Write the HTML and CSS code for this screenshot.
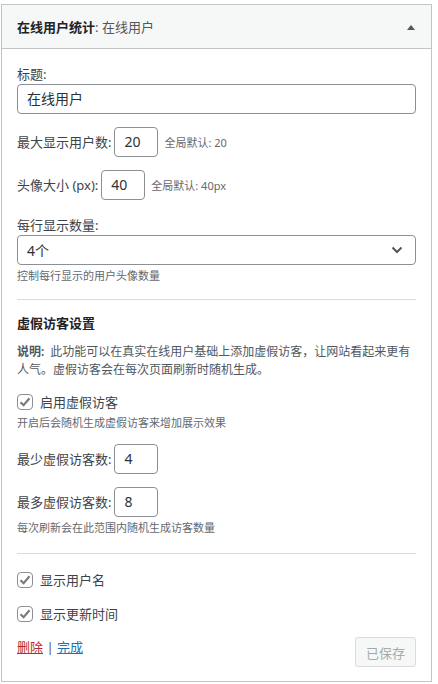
FILE: index.html
```html
<!DOCTYPE html>
<html lang="zh-CN">
<head>
<meta charset="utf-8">
<title>在线用户统计</title>
<link rel="stylesheet" href="styles.css">
</head>
<body>
<div class="widget">
  <div class="widget-top">
    <h3 class="widget-title"><span class="w-name">在线用户统计</span><span class="w-sub">: 在线用户</span></h3>
    <svg class="toggle" width="10" height="6" viewBox="0 0 10 6"><path d="M1 6 L5 1 L9 6 Z" fill="#50575e"/></svg>
  </div>
  <div class="widget-inside">
    <div class="field field-title">
      <label class="lbl">标题:</label>
      <div class="input wide">在线用户</div>
    </div>

    <div class="row row-first">
      <label class="lbl">最大显示用户数:</label>
      <div class="input small">20</div>
      <span class="note">全局默认: 20</span>
    </div>

    <div class="row">
      <label class="lbl">头像大小 (px):</label>
      <div class="input small">40</div>
      <span class="note">全局默认: 40px</span>
    </div>

    <div class="field field-select">
      <label class="lbl">每行显示数量:</label>
      <div class="select">
        <span>4个</span>
        <svg width="12" height="8" viewBox="0 0 12 8"><path d="M1.5 1.5 L6 6 L10.5 1.5" fill="none" stroke="#50575e" stroke-width="2"/></svg>
      </div>
      <div class="help">控制每行显示的用户头像数量</div>
    </div>

    <hr class="divider d1">

    <h4 class="section">虚假访客设置</h4>
    <p class="desc"><strong class="desc-key">说明:</strong><span>此功能可以在真实在线用户基础上添加虚假访客，让网站看起来更有</span><br><span>人气。虚假访客会在每次页面刷新时随机生成。</span></p>

    <div class="check check-fake">
      <span class="box"><svg width="14" height="14" viewBox="0 0 14 14"><path d="M2.5 7.2 L5.6 10.2 L11.5 3.3" fill="none" stroke="#787c82" stroke-width="2.2"/></svg></span>
      <span class="check-text">启用虚假访客</span>
    </div>
    <div class="help help-fake">开启后会随机生成虚假访客来增加展示效果</div>

    <div class="row row-min">
      <label class="lbl">最少虚假访客数:</label>
      <div class="input small">4</div>
    </div>
    <div class="row">
      <label class="lbl">最多虚假访客数:</label>
      <div class="input small">8</div>
    </div>
    <div class="help help-range">每次刷新会在此范围内随机生成访客数量</div>

    <hr class="divider d2">

    <div class="check check-name">
      <span class="box"><svg width="14" height="14" viewBox="0 0 14 14"><path d="M2.5 7.2 L5.6 10.2 L11.5 3.3" fill="none" stroke="#787c82" stroke-width="2.2"/></svg></span>
      <span class="check-text">显示用户名</span>
    </div>
    <div class="check check-time">
      <span class="box"><svg width="14" height="14" viewBox="0 0 14 14"><path d="M2.5 7.2 L5.6 10.2 L11.5 3.3" fill="none" stroke="#787c82" stroke-width="2.2"/></svg></span>
      <span class="check-text">显示更新时间</span>
    </div>

    <div class="actions">
      <div class="links"><a class="del" href="#">删除</a> <span class="sep">|</span> <a class="done" href="#">完成</a></div>
      <button class="saved" disabled>已保存</button>
    </div>
  </div>
</div>
</body>
</html>
```

FILE: styles.css
```css
* { box-sizing: border-box; }
html, body { margin: 0; padding: 0; background: #fff; }
body {
  font-family: "Noto Sans", "Noto Sans CJK SC", sans-serif;
  font-size: 13px;
  color: #3c434a;
}
.widget {
  margin: 4px 0 0 1px;
  width: 431px;
  border: 1px solid #c3c4c7;
  background: #fff;
}
.widget-top {
  height: 44px;
  background: #f6f7f7;
  border-bottom: 1px solid #c3c4c7;
  display: flex;
  align-items: center;
  justify-content: space-between;
  padding: 0 15px 0 15px;
}
.widget-title {
  margin: 0;
  font-size: 13px;
  line-height: 18px;
  font-weight: 600;
  color: #1d2327;
}
.w-sub { font-weight: 400; color: #50575e; }
.toggle { margin-top: 1px; }
.widget-inside { padding: 0 15px 14px; }

.lbl { display: block; line-height: 18px; }
.field-title { padding-top: 16px; }
.field-title .lbl { margin-bottom: 1px; }
.input {
  height: 30px;
  border: 1px solid #8c8f94;
  border-radius: 4px;
  font-size: 14px;
  line-height: 28px;
  padding: 0 9px;
  color: #2c3338;
  background: #fff;
}
.input.wide { width: 100%; }
.input.small { width: 44px; }

.row { display: flex; align-items: center; margin-top: 13px; }
.row .lbl { margin-right: 3px; }
.note { font-size: 11px; color: #646970; margin-left: 6px; }

.field-select { margin-top: 16px; }
.field-select .lbl { margin-bottom: 1px; }
.select {
  height: 30px;
  border: 1px solid #8c8f94;
  border-radius: 4px;
  font-size: 14px;
  padding: 0 12px 0 9px;
  display: flex;
  align-items: center;
  justify-content: space-between;
  color: #2c3338;
}
.help { font-size: 11px; line-height: 16px; color: #646970; margin-top: 3px; }

.divider { border: 0; border-top: 1px solid #dcdcde; margin: 0; height: 0; }
.d1 { margin-top: 15px; }
.d2 { margin-top: 17px; }

.section {
  margin: 14px 0 0;
  font-size: 13px;
  line-height: 18px;
  font-weight: 600;
  color: #1d2327;
}
.desc {
  margin: 11px 0 0;
  font-size: 12px;
  line-height: 18px;
  color: #50575e;
}
.desc-key { font-weight: 600; color: #50575e; margin-right: 6px; }

.check { display: flex; align-items: center; height: 18px; }
.box {
  width: 16px; height: 16px;
  border: 1px solid #8c8f94;
  border-radius: 4px;
  display: flex; align-items: center; justify-content: center;
  margin-right: 7px;
  background: #fff;
}
.check-text { line-height: 18px; color: #3c434a; }
.check-fake { margin-top: 14px; }
.help-fake { margin-top: 4px; }
.row-min { margin-top: 13px; }
.help-range { margin-top: 3px; }
.check-name { margin-top: 17px; }
.check-time { margin-top: 16px; }

.actions {
  margin-top: 14px;
  display: flex;
  justify-content: space-between;
  align-items: flex-start;
}
.links { line-height: 18px; padding-top: 1px; }
.links a { text-decoration: underline; }
.del { color: #b32d2e; }
.done { color: #2271b1; }
.sep { color: #50575e; }
.saved {
  height: 30px;
  padding: 0 10px;
  font-family: inherit;
  font-size: 13px;
  color: #a7aaad;
  background: #f6f7f7;
  border: 1px solid #dcdcde;
  border-radius: 3px;
}
```
